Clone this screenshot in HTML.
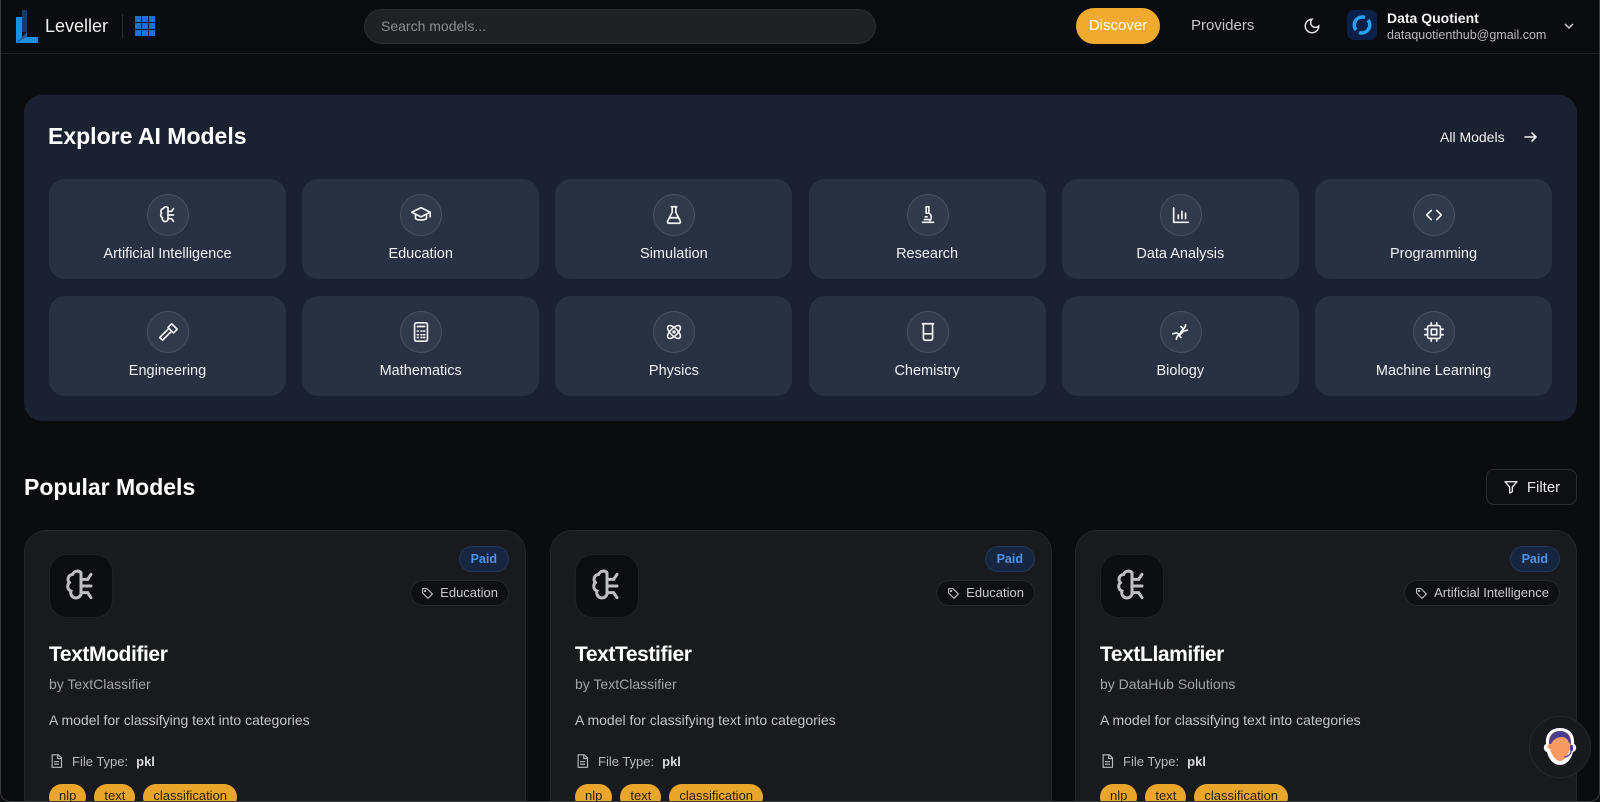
<!DOCTYPE html>
<html><head><meta charset="utf-8"><style>
*{box-sizing:border-box;margin:0;padding:0}
html,body{width:1600px;height:802px;overflow:hidden;background:#0b0c0f;font-family:"Liberation Sans",sans-serif;color:#e8e8ea}
.frame{position:absolute;left:0;top:0;width:1600px;height:802px;border:1px solid #3a3b3f;border-top:none;border-radius:0 0 10px 10px;overflow:hidden}
.a{position:absolute}
.hdr{left:0;top:0;width:1600px;height:54px;border-bottom:1px solid #1e2024;background:#0b0c0f}
.panel{left:23px;top:95px;width:1553px;height:326px;background:#1a2130;border-radius:18px}
.tile{position:absolute;width:237px;height:100px;background:#283141;border-radius:16px;text-align:center}
.tile .ic{position:absolute;left:98px;top:15px;width:42px;height:42px;border-radius:50%;background:#313a4a;border:1px solid #475062;display:flex;align-items:center;justify-content:center}
.tile .lb{position:absolute;left:0;right:0;top:67px;font-size:14.5px;color:#eef0f3}
.card{position:absolute;top:530px;width:502px;height:300px;background:#181a1e;border:1px solid #24262b;border-radius:22px}
.ib{position:absolute;left:24px;top:23px;width:64px;height:64px;border-radius:18px;background:#0d0e10;border:1px solid #1f2125;display:flex;align-items:center;justify-content:center}
.paid{position:absolute;right:16px;top:15px;height:26px;padding:0 11px;border-radius:13px;background:#172640;border:1px solid #22375a;color:#4e93e8;font-size:12.5px;line-height:24px;font-weight:bold}
.cat{position:absolute;right:16px;top:49px;height:26px;padding:0 10px 0 10px;border-radius:13px;background:#0f1012;border:1px solid #25272b;color:#c9cacd;font-size:13px;line-height:24px;display:flex;align-items:center;gap:6px}
.tt{position:absolute;left:24px;top:112px;font-size:21px;font-weight:bold;color:#fff;letter-spacing:-0.4px}
.by{position:absolute;left:24px;top:145px;font-size:14px;color:#a2a4a8}
.ds{position:absolute;left:24px;top:181px;font-size:14px;color:#c2c4c8}
.ft{position:absolute;left:24px;top:222px;font-size:13px;color:#b8babd;display:flex;align-items:center;gap:8px}
.ft b{color:#d8d9db}
.tags{position:absolute;left:24px;top:253px;display:flex;gap:8px}
.tag{height:26px;padding:0 10px;border-radius:13px;background:#eaa52b;color:#2a2010;font-size:13px;line-height:24px}
svg{display:block}
</style></head><body><div class="frame">
<div class="a hdr">
  <svg class="a" style="left:15px;top:10px" width="22" height="33" viewBox="0 0 22 33"><path d="M6 0h5v22H6z" fill="#0d3b78"/><path d="M0 7h6v26H0z" fill="#1a8ee0"/><path d="M0 27h22v6H0z" fill="#1a8ee0"/><path d="M0 33l11-11v5z" fill="#0f5fb0"/></svg>
  <div class="a" style="left:44px;top:16px;font-size:18px;color:#f0f0f2">Leveller</div>
  <div class="a" style="left:121px;top:14px;width:1px;height:24px;background:#2a2c30"></div>
  <svg class="a" style="left:134px;top:16px" width="20" height="20" viewBox="0 0 20 20" fill="#1f6fe3"><rect x="0" y="0" width="6" height="6"/><rect x="7" y="0" width="6" height="6"/><rect x="14" y="0" width="6" height="6"/><rect x="0" y="7" width="6" height="6"/><rect x="7" y="7" width="6" height="6"/><rect x="14" y="7" width="6" height="6"/><rect x="0" y="14" width="6" height="6"/><rect x="7" y="14" width="6" height="6"/><rect x="14" y="14" width="6" height="6"/></svg>
  <div class="a" style="left:363px;top:9px;width:512px;height:35px;border-radius:18px;background:#1f2125;border:1px solid #2a2c30;color:#8a8c90;font-size:14px;line-height:33px;padding-left:16px">Search models...</div>
  <div class="a" style="left:1075px;top:8px;width:84px;height:36px;border-radius:18px;background:#f0aa2e;color:#fff;font-size:15px;line-height:36px;text-align:center">Discover</div>
  <div class="a" style="left:1190px;top:17px;font-size:15px;color:#c4c6ca">Providers</div>
  <svg class="a" style="left:1302px;top:17px" width="18" height="18" viewBox="0 0 24 24" fill="none" stroke="#e6e6e8" stroke-width="2" stroke-linecap="round"><path d="M12 3a6 6 0 0 0 9 9 9 9 0 1 1-9-9z"/></svg>
  <div class="a" style="left:1346px;top:10px;width:30px;height:30px;border-radius:7px;background:#0a1f4a;display:flex;align-items:center;justify-content:center"><svg width="24" height="24" viewBox="0 0 24 24" fill="none" stroke="#27a0ee" stroke-width="3.5"><path d="M6 17A8 8 0 0 1 15 4.5"/><path d="M18 7A8 8 0 0 1 9 19.5"/></svg></div>
  <div class="a" style="left:1386px;top:10px;font-size:14px;font-weight:bold;color:#f2f2f4">Data Quotient</div>
  <div class="a" style="left:1386px;top:28px;font-size:12.5px;color:#b8babd">dataquotienthub@gmail.com</div>
  <svg class="a" style="left:1562px;top:20px" width="12" height="12" viewBox="0 0 12 12" fill="none" stroke="#ccc" stroke-width="1.5"><path d="M2 4l4 4 4-4"/></svg>
</div>

<div class="a panel">
  <div class="a" style="left:24px;top:28px;font-size:23px;font-weight:bold;color:#fff">Explore AI Models</div>
  <div class="a" style="left:1416px;top:34px;font-size:14px;color:#f0f0f2">All Models</div>
  <svg class="a" style="left:1500px;top:35px" width="14" height="14" viewBox="0 0 14 14" fill="none" stroke="#eee" stroke-width="1.6" stroke-linecap="round"><path d="M1 7h11M8 3l4 4-4 4"/></svg>
</div>
<div id="tiles"></div>

<div class="a" style="left:23px;top:474px;font-size:23px;font-weight:bold;color:#fff">Popular Models</div>
<div class="a" style="left:1485px;top:469px;width:91px;height:36px;border-radius:8px;border:1px solid #2a2c30;background:#0e0f12;display:flex;align-items:center;justify-content:center;gap:8px;font-size:15px;color:#e6e6e8"><svg width="16" height="16" viewBox="0 0 24 24" fill="none" stroke="#e6e6e8" stroke-width="2" stroke-linejoin="round"><path d="M3 4h18l-7 8v7l-4 2v-9z"/></svg>Filter</div>

<div class="card" style="left:23px">
  <div class="ib"><svg width="40" height="40" viewBox="0 0 24 24" fill="none" stroke="#bfbfc2" stroke-width="1.8" stroke-linecap="round"><path d="M12 4a3 3 0 0 0-5 1 3 3 0 0 0-2 5 3 3 0 0 0 1 5 3 3 0 0 0 6 2V4z"/><path d="M12 8h4l2-3M12 12h6M12 16h4l2 3"/></svg></div>
  <div class="paid">Paid</div>
  <div class="cat"><svg width="13" height="13" viewBox="0 0 24 24" fill="none" stroke="#c9cacd" stroke-width="2"><path d="M3 3h8l10 10-8 8L3 11z"/><circle cx="7.5" cy="7.5" r="1"/></svg>Education</div>
  <div class="tt">TextModifier</div><div class="by">by TextClassifier</div>
  <div class="ds">A model for classifying text into categories</div>
  <div class="ft"><svg width="15" height="16" viewBox="0 0 24 24" fill="none" stroke="#b8babd" stroke-width="1.8"><path d="M5 2h10l5 5v15H5z M14 2v6h6 M8 13h8 M8 17h8"/></svg>File Type: <b>pkl</b></div>
  <div class="tags"><div class="tag">nlp</div><div class="tag">text</div><div class="tag">classification</div></div>
</div>
<div class="card" style="left:549px">
  <div class="ib"><svg width="40" height="40" viewBox="0 0 24 24" fill="none" stroke="#bfbfc2" stroke-width="1.8" stroke-linecap="round"><path d="M12 4a3 3 0 0 0-5 1 3 3 0 0 0-2 5 3 3 0 0 0 1 5 3 3 0 0 0 6 2V4z"/><path d="M12 8h4l2-3M12 12h6M12 16h4l2 3"/></svg></div>
  <div class="paid">Paid</div>
  <div class="cat"><svg width="13" height="13" viewBox="0 0 24 24" fill="none" stroke="#c9cacd" stroke-width="2"><path d="M3 3h8l10 10-8 8L3 11z"/><circle cx="7.5" cy="7.5" r="1"/></svg>Education</div>
  <div class="tt">TextTestifier</div><div class="by">by TextClassifier</div>
  <div class="ds">A model for classifying text into categories</div>
  <div class="ft"><svg width="15" height="16" viewBox="0 0 24 24" fill="none" stroke="#b8babd" stroke-width="1.8"><path d="M5 2h10l5 5v15H5z M14 2v6h6 M8 13h8 M8 17h8"/></svg>File Type: <b>pkl</b></div>
  <div class="tags"><div class="tag">nlp</div><div class="tag">text</div><div class="tag">classification</div></div>
</div>
<div class="card" style="left:1074px">
  <div class="ib"><svg width="40" height="40" viewBox="0 0 24 24" fill="none" stroke="#bfbfc2" stroke-width="1.8" stroke-linecap="round"><path d="M12 4a3 3 0 0 0-5 1 3 3 0 0 0-2 5 3 3 0 0 0 1 5 3 3 0 0 0 6 2V4z"/><path d="M12 8h4l2-3M12 12h6M12 16h4l2 3"/></svg></div>
  <div class="paid">Paid</div>
  <div class="cat"><svg width="13" height="13" viewBox="0 0 24 24" fill="none" stroke="#c9cacd" stroke-width="2"><path d="M3 3h8l10 10-8 8L3 11z"/><circle cx="7.5" cy="7.5" r="1"/></svg>Artificial Intelligence</div>
  <div class="tt">TextLlamifier</div><div class="by">by DataHub Solutions</div>
  <div class="ds">A model for classifying text into categories</div>
  <div class="ft"><svg width="15" height="16" viewBox="0 0 24 24" fill="none" stroke="#b8babd" stroke-width="1.8"><path d="M5 2h10l5 5v15H5z M14 2v6h6 M8 13h8 M8 17h8"/></svg>File Type: <b>pkl</b></div>
  <div class="tags"><div class="tag">nlp</div><div class="tag">text</div><div class="tag">classification</div></div>
</div>

<div class="a" style="left:1528px;top:716px;width:62px;height:62px;border-radius:50%;background:#17191c;border:1px solid #25272b;display:flex;align-items:center;justify-content:center">
<svg width="40" height="42" viewBox="0 0 40 42"><path d="M20 2C10 2 5 9 6 18c-3 1-3 7 1 8 2 8 7 13 13 13s11-5 13-13c4-1 4-7 1-8 1-9-4-16-14-16z" fill="#fff"/><path d="M20 5C12 5 8 10 9 18c-2 1-2 5 1 5 2 7 6 12 10 12s8-5 10-12c3 0 3-4 1-5 1-8-3-13-11-13z" fill="#f79a62"/><path d="M9 18c0-9 5-13 11-13s11 4 11 13l-2-1c-1-4-4-6-7-6-5 0-8 2-11 7z" fill="#4a3f8f"/><rect x="30" y="19" width="3" height="6" rx="1" fill="#4a3f8f"/><path d="M31 25c0 4-4 6-7 6" stroke="#4a3f8f" stroke-width="1.2" fill="none"/></svg>
</div>
</div>
<script>
var L=[["Artificial Intelligence",'<path d="M12 4a3 3 0 0 0-5 1 3 3 0 0 0-2 5 3 3 0 0 0 1 5 3 3 0 0 0 6 2V4z"/><path d="M12 8h4l2-3M12 12h6M12 16h4l2 3"/>'],
["Education",'<path d="M2 9l10-5 10 5-10 5z"/><path d="M6 11v5c3 2 9 2 12 0v-5M22 9v5"/>'],
["Simulation",'<path d="M9 3h6M10 3v6l-5 10a1.5 1.5 0 0 0 1 2h12a1.5 1.5 0 0 0 1-2l-5-10V3M7 15h10"/>'],
["Research",'<path d="M6 20h12M8 17h6M10 3h3v7h-3zM13 10a5 5 0 0 1 1 8M9 14h2"/>'],
["Data Analysis",'<path d="M4 4v16h16M9 16v-4M13 16V8M17 16v-6"/>'],
["Programming",'<path d="M9 7l-5 5 5 5M15 7l5 5-5 5"/>'],
["Engineering",'<path d="M15 12l-9 9-3-3 9-9M12 7l4-4 6 6-4 4z"/>'],
["Mathematics",'<rect x="5" y="2" width="14" height="20" rx="2"/><path d="M8 6h8M8 11h1M12 11h1M15 11h1M8 15h1M12 15h1M15 15h1M8 18h1M12 18h1M15 18h1"/>'],
["Physics",'<circle cx="12" cy="12" r="1"/><ellipse cx="12" cy="12" rx="9" ry="4" transform="rotate(45 12 12)"/><ellipse cx="12" cy="12" rx="9" ry="4" transform="rotate(-45 12 12)"/>'],
["Chemistry",'<path d="M6 3h12M7 3v16a2 2 0 0 0 2 2h6a2 2 0 0 0 2-2V3M7 14h10"/>'],
["Biology",'<path d="M3 14l4-1 4 2 4-4 4-1M7 20c0-5 5-6 5-8s5-3 5-8M12 6l2 2M10 16l2 2"/>'],
["Machine Learning",'<rect x="5" y="5" width="14" height="14" rx="2"/><rect x="9" y="9" width="6" height="6"/><path d="M9 2v3M15 2v3M9 19v3M15 19v3M2 9h3M2 15h3M19 9h3M19 15h3"/>']];
var h="";L.forEach(function(t,i){var c=i%6,r=Math.floor(i/6);var x=48+c*253.2,y=179+r*117;
h+='<div class="tile" style="left:'+x+'px;top:'+y+'px"><div class="ic"><svg width="22" height="22" viewBox="0 0 24 24" fill="none" stroke="#f2f3f5" stroke-width="1.8" stroke-linecap="round" stroke-linejoin="round">'+t[1]+'</svg></div><div class="lb">'+t[0]+'</div></div>';});
document.getElementById("tiles").innerHTML=h;
</script>
</body></html>
